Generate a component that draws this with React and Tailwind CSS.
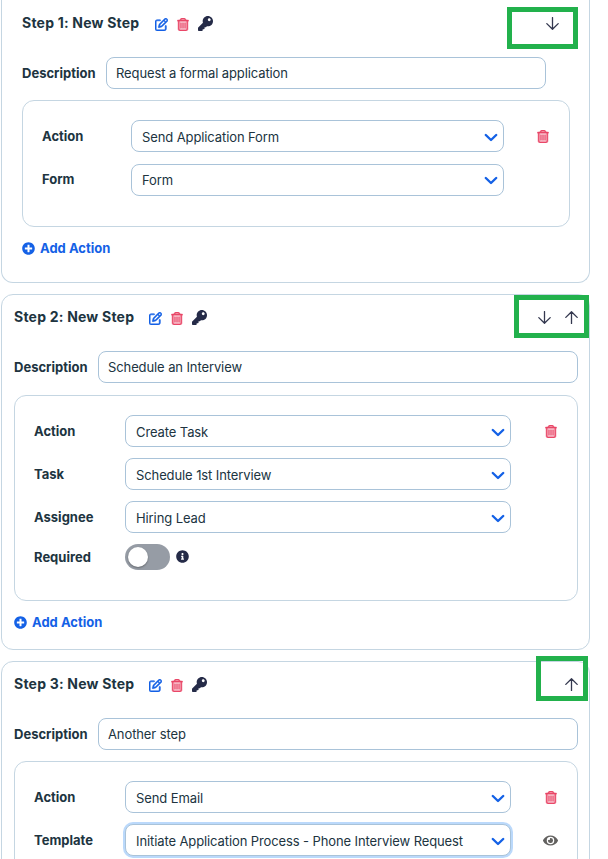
import React from "react";
import { FaKey, FaPlusCircle, FaInfoCircle, FaEye } from "react-icons/fa";
import { FaRegPenToSquare, FaRegTrashCan } from "react-icons/fa6";

function Chevron() {
  return (
    <svg className="h-[14px] w-[14px] shrink-0 text-[#1461e6]" viewBox="0 0 14 14" fill="none" stroke="currentColor" strokeWidth="2.4" strokeLinecap="round" strokeLinejoin="round">
      <path d="M1.8 4 L7 9 L12.2 4" />
    </svg>
  );
}

function Arrow({ up }) {
  return (
    <svg className="h-[13px] w-[13px] shrink-0" viewBox="0 0 13 13" fill="none" stroke="currentColor" strokeWidth="1.3" strokeLinecap="round" strokeLinejoin="round">
      {up ? <path d="M6.5 12.4V0.8M0.8 6.4L6.5 0.8L12.2 6.4" /> : <path d="M6.5 0.6V12.2M0.8 6.6L6.5 12.2L12.2 6.6" />}
    </svg>
  );
}

function Trash() {
  return <FaRegTrashCan className="h-[13px] w-[12px] text-[#ea4868]" stroke="currentColor" strokeWidth="20" />;
}

function Field({ label, value, labelWidth, selectWidth, focused, raised, end }) {
  return (
    <div className="flex h-8 items-center">
      <div className={`${labelWidth} shrink-0 text-[13px] font-bold ${raised ? "" : "pt-[2px]"}`}>{label}</div>
      <div
        className={`${selectWidth} flex h-8 shrink-0 items-center justify-between rounded-lg border border-[#a9c3d9] bg-white pl-[10px] pr-[5px] ${raised ? "pt-px" : "pt-[3px]"} ${focused ? "shadow-[0_0_0_2px_#bbd9fb]" : ""}`}
      >
        <span className="text-[13px] tracking-[-0.008em] whitespace-nowrap">{value}</span>
        <Chevron />
      </div>
      <div className="flex flex-1 justify-center">{end}</div>
    </div>
  );
}

function StepTitle({ title, children }) {
  return (
    <div className="flex h-6 items-center">
      <h2 className="mb-[2px] w-[119px] text-[14px] font-bold tracking-[0.015em] whitespace-nowrap">{title}</h2>
      <div className={`flex items-center ${title.startsWith("Step 1") ? "ml-[14px]" : "ml-4"}`}>
        <FaRegPenToSquare className="mt-[2px] h-[13px] w-[13px] text-[#1461e6]" stroke="currentColor" strokeWidth="20" />
        <span className="mt-[3px] ml-[9px]"><Trash /></span>
        <FaKey className="ml-[9px] h-[15px] w-[15px] text-[#252b48]" />
      </div>
      <div className="ml-auto flex items-center gap-[14px] text-[#34384f]">{children}</div>
    </div>
  );
}

function Description({ value, inputWidth }) {
  return (
    <div className="flex h-8 items-center">
      <div className="w-[84px] shrink-0 pt-[2px] text-[13px] font-bold">Description</div>
      <div className={`${inputWidth} flex h-8 items-center rounded-lg border border-[#a9c3d9] px-[9px] pt-[2px] text-[13px] tracking-[-0.008em]`}>{value}</div>
    </div>
  );
}

function AddAction() {
  return (
    <div className="flex h-5 items-center gap-[5px] text-[#1461e6]">
      <FaPlusCircle className="h-[13px] w-[13px]" />
      <span className="pt-px text-[13px] font-bold">Add Action</span>
    </div>
  );
}

export default function App() {
  return (
    <main className="relative h-[859px] w-[608px] overflow-hidden bg-white font-['Inter',sans-serif] text-[#20343f]">
      <section className="ml-px h-[283px] w-[589px] rounded-b-xl border border-t-0 border-[#c5d6e2] pt-[11px] pl-5">
        <div className="w-[537px]">
          <StepTitle title="Step 1: New Step">
            <Arrow />
          </StepTitle>
        </div>
        <div className="mt-[22px]">
          <Description value="Request a formal application" inputWidth="w-[440px]" />
        </div>
        <div className="mt-[11px] flex h-[127px] w-[548px] flex-col gap-3 rounded-xl border border-[#c5d6e2] py-[19px] pl-[19px] pr-[14px]">
          <Field label="Action" value="Send Application Form" labelWidth="w-[89px]" selectWidth="w-[373px]" end={<span className="mt-px ml-[26px]"><Trash /></span>} />
          <Field raised label="Form" value="Form" labelWidth="w-[89px]" selectWidth="w-[373px]" />
        </div>
        <div className="mt-[11px]">
          <AddAction />
        </div>
      </section>

      <section className="mt-[11px] ml-px h-[356px] w-[589px] rounded-xl border border-[#c5d6e2] pt-[10px] pr-[11px] pl-3">
        <StepTitle title="Step 2: New Step">
          <Arrow />
          <Arrow up />
        </StepTitle>
        <div className="mt-[22px]">
          <Description value="Schedule an Interview" inputWidth="w-[480px]" />
        </div>
        <div className="mt-3 flex h-[206px] flex-col gap-[11px] rounded-xl border border-[#c5d6e2] py-[19px] pl-[19px] pr-[14px]">
          <Field label="Action" value="Create Task" labelWidth="w-[91px]" selectWidth="w-[386px]" end={<span className="mt-px ml-[27px]"><Trash /></span>} />
          <Field label="Task" value="Schedule 1st Interview" labelWidth="w-[91px]" selectWidth="w-[386px]" />
          <Field label="Assignee" value="Hiring Lead" labelWidth="w-[91px]" selectWidth="w-[386px]" />
          <div className="flex h-[26px] items-center">
            <div className="w-[91px] pt-[2px] text-[13px] font-bold">Required</div>
            <div className="flex h-[26px] w-[45px] items-center rounded-full bg-[#969ca5] pl-[3px]">
              <div className="h-5 w-5 rounded-full bg-white shadow-[0_1px_2px_#0005]" />
            </div>
            <FaInfoCircle className="mb-[2px] ml-[6px] h-[13px] w-[13px] text-[#252b48]" />
          </div>
        </div>
        <div className="mt-[11px]">
          <AddAction />
        </div>
      </section>

      <section className="mt-[11px] ml-px h-[300px] w-[589px] rounded-xl border border-[#c5d6e2] pt-[10px] pr-[11px] pl-3">
        <StepTitle title="Step 3: New Step">
          <Arrow up />
        </StepTitle>
        <div className="mt-[22px]">
          <Description value="Another step" inputWidth="w-[480px]" />
        </div>
        <div className="mt-[11px] flex h-[206px] flex-col gap-[11px] rounded-xl border border-[#c5d6e2] py-[19px] pl-[19px] pr-[14px]">
          <Field label="Action" value="Send Email" labelWidth="w-[91px]" selectWidth="w-[386px]" end={<span className="mt-px ml-[27px]"><Trash /></span>} />
          <Field focused label="Template" value="Initiate Application Process - Phone Interview Request" labelWidth="w-[91px]" selectWidth="w-[386px]" end={<FaEye className="ml-[27px] h-[15px] w-[15px] text-[#62615f]" />} />
        </div>
      </section>

      <div className="absolute top-[7px] left-[507px] h-[42px] w-[71px] border-5 border-[#22b14c]" />
      <div className="absolute top-[295px] left-[514px] h-[43px] w-[75px] border-5 border-[#22b14c]" />
      <div className="absolute top-[656px] left-[536px] h-[45px] w-[52px] border-5 border-[#22b14c]" />
    </main>
  );
}
